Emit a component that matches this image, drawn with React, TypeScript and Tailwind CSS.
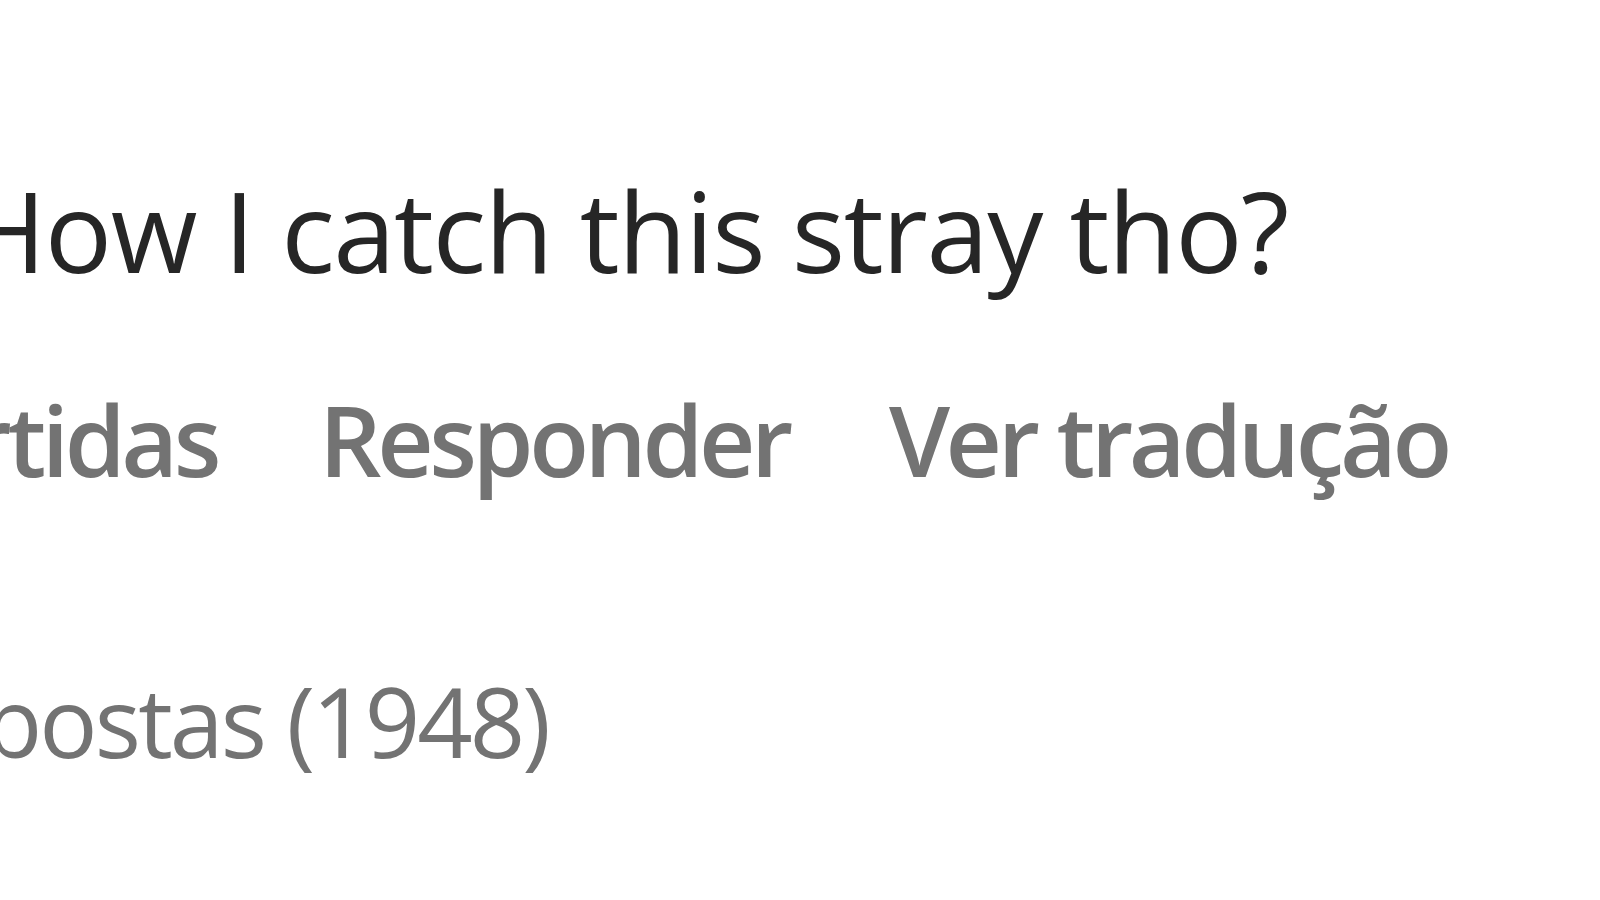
import React from 'react';

// Zoomed-in crop of a comment: body text, action row and replies link
const App: React.FC = () => {
  return (
    <div
      className="w-[1600px] h-[900px] overflow-hidden bg-white flex flex-col"
      style={{ fontFamily: '"Open Sans", "Noto Sans", Arial, sans-serif' }}
    >
      {/* comment text */}
      <div className="mt-[160px] flex whitespace-nowrap">
        <div className="w-[1288px] shrink-0 flex justify-end">
          <span className="text-[112px] leading-[140px] text-[#262626] tracking-[-0.013em]">
            How I catch this stray tho?
          </span>
        </div>
      </div>

      {/* actions */}
      <div className="mt-[79px] flex items-baseline whitespace-nowrap text-[98px] leading-[120px] font-semibold text-[#737373] tracking-[-0.045em]">
        <div className="w-[217px] shrink-0 flex justify-end">
          <span>12 curtidas</span>
        </div>
        <span className="ml-[102px]">Responder</span>
        <span className="ml-[100px]">Ver tradução</span>
      </div>

      {/* replies */}
      <div className="mt-[161px] flex whitespace-nowrap">
        <div className="w-[548px] shrink-0 flex justify-end">
          <span className="text-[97px] leading-[120px] text-[#737373] tracking-[-0.03em]">
            Ver respostas (1948)
          </span>
        </div>
      </div>
    </div>
  );
};

export default App;
